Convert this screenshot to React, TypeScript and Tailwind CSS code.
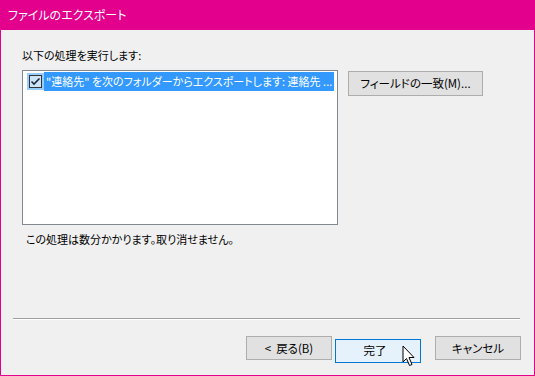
import React from 'react';

const font = "font-['Noto_Sans_CJK_JP','Noto_Sans',sans-serif] [font-feature-settings:'palt']";

function DialogButton({ children, primary }: { children: React.ReactNode; primary?: boolean }) {
  return (
    <button
      className={`h-[24px] w-[86px] border text-[11.5px] text-black leading-none ${
        primary ? 'border-[#0078d7] bg-[#e5f1fb]' : 'border-[#adadad] bg-[#e1e1e1]'
      }`}
    >
      {children}
    </button>
  );
}

function Cursor() {
  return (
    <svg className="absolute left-[401px] top-[345px]" width="14" height="22" viewBox="0 0 14 22">
      <path
        d="M1 1 L1 17 L4.5 13.5 L7.5 20.5 L10 19.5 L7 12.5 L12 12.5 Z"
        fill="#fff"
        stroke="#000"
        strokeWidth="1"
      />
    </svg>
  );
}

export default function App() {
  return (
    <div className={`relative w-[535px] h-[376px] flex flex-col bg-[#f0f0f0] border-x border-b border-[#e3008c] ${font}`}>
      {/* title bar */}
      <div className="h-[30px] -mx-px bg-[#e3008c] flex items-center px-[8px] text-white text-[12px]">
        ファイルのエクスポート
      </div>

      <div className="flex flex-col flex-1 px-[21px]">
        <p className="mt-[17px] text-[11px] leading-[16px] text-black">以下の処理を実行します:</p>

        <div className="flex items-start mt-[7px]">
          <div className="w-[316px] h-[155px] border border-[#828790] bg-white pt-[1px] pl-[4px] pr-[3px]">
            <div className="flex h-[19px] items-center">
              <div className="w-[17px] h-[17px] bg-[#99ccff] flex items-center justify-center">
                <svg width="13" height="13" viewBox="0 0 13 13">
                  <rect x="0.5" y="0.5" width="12" height="12" fill="#cce4f7" stroke="#333" />
                  <path d="M2.5 6.5 L5 9 L10.5 3.5" fill="none" stroke="#1a2a40" strokeWidth="1.6" />
                </svg>
              </div>
              <div className="flex-1 h-full bg-[#3399ff] text-white text-[11px] leading-[19px] pl-[2px] whitespace-nowrap overflow-hidden">
                "連絡先" を次のフォルダーからエクスポートします: 連絡先 ...
              </div>
            </div>
          </div>
          <button className="ml-[10px] mt-[1px] w-[135px] h-[25px] border border-[#adadad] bg-[#e1e1e1] text-[11.5px] text-black leading-none">
            フィールドの一致(M)...
          </button>
        </div>

        <p className="mt-[6px] ml-[4px] text-[11px] leading-[16px] text-black">
          この処理は数分かかります。取り消せません。
        </p>

        <div className="flex-1" />

        <div className="-ml-[9px] mr-[-7px] h-[2px] border-t border-[#a0a0a0] border-b border-b-white" />

        <div className="flex justify-end gap-[3px] mt-[16px] mb-[12px] mr-[-8px]">
          <DialogButton>
            <span className="mr-[5px]">&lt;</span>戻る(B)
          </DialogButton>
          <div className="mr-[11px]">
            <DialogButton primary>
              <span className="mr-[6px]">完了</span>
            </DialogButton>
          </div>
          <DialogButton>キャンセル</DialogButton>
        </div>
      </div>

      <Cursor />
    </div>
  );
}
